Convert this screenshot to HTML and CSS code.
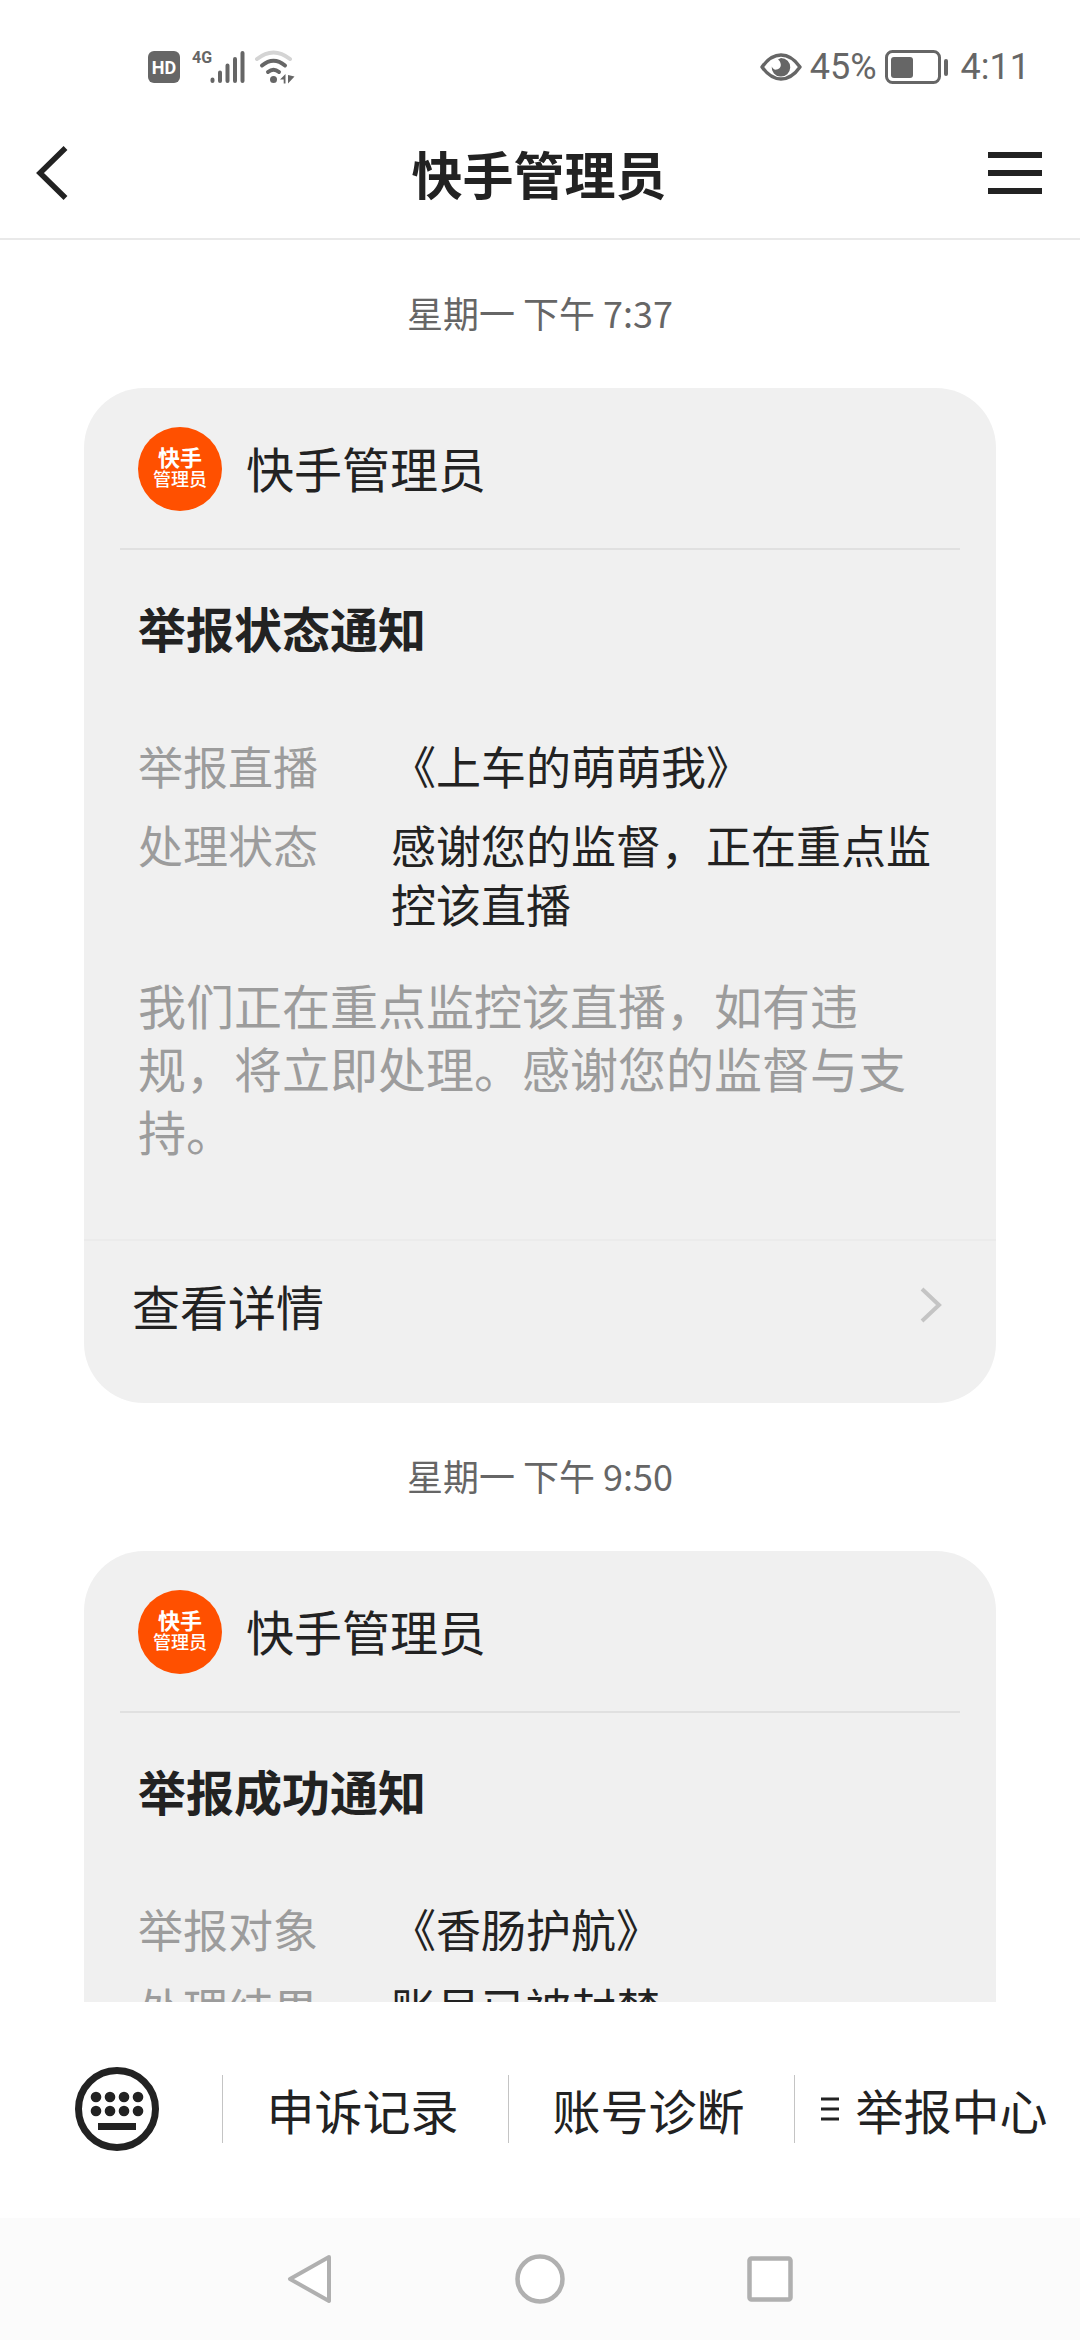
FILE: index.html
```html
<!DOCTYPE html>
<html lang="zh-CN">
<head>
<meta charset="utf-8">
<meta name="viewport" content="width=device-width, initial-scale=1">
<title>快手管理员</title>
<link rel="stylesheet" href="styles.css">
</head>
<body>
<div class="app">
  <div class="status-bar">
    <div class="status-group">
      <svg class="icon-hd" viewBox="0 0 32 32" width="32" height="32" aria-hidden="true">
        <rect width="32" height="32" rx="6" fill="#666"/>
        <text x="16" y="23" text-anchor="middle" class="hd-text">HD</text>
      </svg>
      <svg class="icon-signal" viewBox="0 0 54 36" width="54" height="36" aria-hidden="true">
        <text x="0" y="14" class="net-text">4G</text>
        <g stroke="#666" stroke-width="4" stroke-linecap="round">
          <path d="M20.500 30.500v1.500M28 23.500V32M35.500 16.500V32M43 10V32M50.500 4V32"/>
        </g>
      </svg>
      <svg class="icon-wifi" viewBox="0 0 42 36" width="42" height="36" aria-hidden="true">
        <g fill="none" stroke-width="4" stroke-linecap="round">
          <path d="M3 10Q19.500-3 36 10" stroke="#d4d4d4"/>
          <path d="M8 16.500Q19.500 7 31 16.500" stroke="#666"/>
          <path d="M14 23Q19.500 18.500 25 23" stroke="#666"/>
        </g>
        <circle cx="19.500" cy="30.500" r="3.500" fill="#666"/>
        <path d="M26 30.500L31.500 25v9.500h-1.800v-4zM34 26l6.500 1.500L34 34.500z" fill="#666"/>
      </svg>
    </div>
    <div class="status-group">
      <svg class="icon-eye" viewBox="0 0 42 30" width="42" height="30" aria-hidden="true">
        <path d="M2 15C8 6.500 14 3 21 3s13 3.500 19 12C34 23.500 28 27 21 27S8 23.500 2 15z" fill="none" stroke="#666" stroke-width="3.400" stroke-linejoin="round"/>
        <path d="M21 6a9.300 9.300 0 1 1-9.300 8.500c1 2.500 3 3.500 5 3 3-.5 4.500-3 4-5.500-.3-2-1-3-2.700-4.500z" fill="#666"/>
      </svg>
      <span class="battery-text">45%</span>
      <svg class="icon-battery" viewBox="0 0 64 34" width="64" height="34" aria-hidden="true">
        <rect x="1.500" y="1.500" width="53" height="31" rx="6" fill="none" stroke="#666" stroke-width="3"/>
        <rect x="6" y="7" width="22" height="21" rx="3" fill="#666"/>
        <rect x="59" y="9" width="4" height="17" rx="2" fill="#666"/>
      </svg>
      <span class="clock">4:11</span>
    </div>
  </div>

  <header class="header">
    <button class="icon-button" type="button" aria-label="返回">
      <svg viewBox="0 0 32 54" width="32" height="54"><path d="M29.500 2L4 27l25.500 25" fill="none" stroke="#222" stroke-width="5.500"/></svg>
    </button>
    <h1 class="header-title">快手管理员</h1>
    <button class="icon-button" type="button" aria-label="菜单">
      <svg viewBox="0 0 54 42" width="54" height="42"><path d="M0 3h54M0 21h54M0 39h54" stroke="#222" stroke-width="6"/></svg>
    </button>
  </header>

  <main class="messages">
    <time class="timestamp">星期一 下午 7:37</time>
    <article class="card">
      <div class="card-head">
        <div class="avatar"><span class="avatar-top">快手</span><span class="avatar-bottom">管理员</span></div>
        <span class="sender">快手管理员</span>
      </div>
      <div class="card-body">
        <h2 class="card-title">举报状态通知</h2>
        <dl class="fields">
          <dt>举报直播</dt><dd>《上车的萌萌我》</dd>
          <dt>处理状态</dt><dd>感谢您的监督，正在重点监控该直播</dd>
        </dl>
        <p class="note">我们正在重点监控该直播，如有违规，将立即处理。感谢您的监督与支持。</p>
      </div>
      <a class="card-link" href="#">
        <span>查看详情</span>
        <svg viewBox="0 0 22 36" width="22" height="36" aria-hidden="true"><path d="M2 2l17 16L2 34" fill="none" stroke="#c4c4c4" stroke-width="4"/></svg>
      </a>
    </article>

    <time class="timestamp">星期一 下午 9:50</time>
    <article class="card">
      <div class="card-head">
        <div class="avatar"><span class="avatar-top">快手</span><span class="avatar-bottom">管理员</span></div>
        <span class="sender">快手管理员</span>
      </div>
      <div class="card-body">
        <h2 class="card-title">举报成功通知</h2>
        <dl class="fields">
          <dt>举报对象</dt><dd>《香肠护航》</dd>
          <dt>处理结果</dt><dd>账号已被封禁</dd>
        </dl>
      </div>
    </article>
  </main>

  <footer class="toolbar">
    <button class="keyboard" type="button" aria-label="键盘">
      <svg viewBox="0 0 84 84" width="84" height="84">
        <circle cx="42" cy="42" r="38.500" fill="none" stroke="#222" stroke-width="7"/>
        <g fill="#222">
          <circle cx="21" cy="30" r="5.300"/><circle cx="35" cy="30" r="5.300"/><circle cx="49" cy="30" r="5.300"/><circle cx="63" cy="30" r="5.300"/>
          <circle cx="21" cy="44" r="5.300"/><circle cx="35" cy="44" r="5.300"/><circle cx="49" cy="44" r="5.300"/><circle cx="63" cy="44" r="5.300"/>
          <rect x="23" y="56" width="38" height="7"/>
        </g>
      </svg>
    </button>
    <button class="tab" type="button">申诉记录</button>
    <button class="tab" type="button">账号诊断</button>
    <button class="tab" type="button">
      <svg viewBox="0 0 18 24" width="18" height="24" aria-hidden="true"><path d="M0 2h18M0 12h18M0 22h18" stroke="#222" stroke-width="3"/></svg>
      举报中心
    </button>
  </footer>

  <nav class="system-nav">
    <button type="button" aria-label="后退">
      <svg viewBox="0 0 50 50" width="50" height="50"><path d="M44 3L5 25l39 22z" fill="#fff" stroke="#b0b0b0" stroke-width="4" stroke-linejoin="round"/></svg>
    </button>
    <button type="button" aria-label="主屏幕">
      <svg viewBox="0 0 50 50" width="50" height="50"><circle cx="25" cy="25" r="22.500" fill="#fff" stroke="#b0b0b0" stroke-width="4.500"/></svg>
    </button>
    <button type="button" aria-label="最近任务">
      <svg viewBox="0 0 50 50" width="50" height="50"><rect x="4.500" y="4.500" width="41" height="41" rx="2" fill="#fff" stroke="#b0b0b0" stroke-width="4.500"/></svg>
    </button>
  </nav>
</div>
</body>
</html>
```

FILE: styles.css
```css
* {
  box-sizing: border-box;
}

body {
  margin: 0;
  background: #fff;
  color: #222;
  font-family: "Noto Sans CJK SC", sans-serif;
  font-size: 48px;
}

h1, h2, p, dl, dd {
  margin: 0;
}

button {
  margin: 0;
  padding: 0;
  border: 0;
  background: none;
  color: inherit;
  font: inherit;
}

svg {
  display: block;
  flex: none;
}

.app {
  display: flex;
  flex-direction: column;
  height: 100vh;
}

/* Status bar */
.status-bar {
  display: flex;
  flex: none;
  justify-content: space-between;
  align-items: center;
  height: 108px;
  padding: 26px 50px 0 148px;
  color: #666;
  font-family: Roboto, sans-serif;
  font-size: 36px;
}

.status-group {
  display: flex;
  align-items: center;
}

.icon-signal {
  margin: 0 8px 0 12px;
}

.icon-eye {
  margin-right: 8px;
}

.icon-battery {
  margin: 0 12px 0 8px;
}

.hd-text {
  fill: #fff;
  font-size: 18px;
  font-weight: 700;
}

.net-text {
  fill: #666;
  font-size: 16px;
  font-weight: 700;
}

/* Title bar */
.header {
  display: flex;
  flex: none;
  justify-content: space-between;
  align-items: center;
  height: 132px;
  padding: 0 38px 0 36px;
  border-bottom: 2px solid #e9e9e9;
}

.icon-button {
  display: flex;
  width: 56px;
}

.icon-button:last-child {
  justify-content: flex-end;
}

.header-title {
  font-size: 51px;
  line-height: 60px;
  font-weight: 700;
}

/* Message list */
.messages {
  flex: 1;
  min-height: 0;
  overflow-y: auto;
  scrollbar-width: none;
  padding: 0 84px;
}

.timestamp {
  display: block;
  padding: 52px 0 56px;
  color: #666;
  font-size: 36px;
  line-height: 40px;
  text-align: center;
}

.card {
  border-radius: 60px;
  background: #f0f0f0;
}

.card-head {
  display: flex;
  align-items: center;
  gap: 24px;
  margin: 0 36px;
  padding: 39px 18px 37px;
  border-bottom: 2px solid #e0e0e0;
}

.avatar {
  display: flex;
  flex-direction: column;
  justify-content: center;
  align-items: center;
  width: 84px;
  height: 84px;
  padding-bottom: 4px;
  border-radius: 50%;
  background: #ff5000;
  color: #fff;
  line-height: 22px;
  text-align: center;
}

.avatar-top {
  font-size: 22px;
  font-weight: 700;
}

.avatar-bottom {
  font-size: 18px;
  font-weight: 500;
}

.sender {
  padding-bottom: 4px;
  line-height: 60px;
}

.card-body {
  padding: 47px 54px 77px;
}

.card-title {
  font-size: 48px;
  line-height: 60px;
  font-weight: 700;
}

.fields {
  display: grid;
  grid-template-columns: 253px 1fr;
  row-gap: 20px;
  margin-top: 79px;
  font-size: 45px;
  line-height: 59px;
}

.fields dt {
  color: #9c9c9c;
}

.note {
  margin-top: 40px;
  color: #9c9c9c;
  line-height: 63px;
}

.card-link {
  display: flex;
  justify-content: space-between;
  align-items: center;
  padding: 32px 54px 66px 48px;
  border-top: 2px solid #ebebeb;
  color: inherit;
  line-height: 64px;
  text-decoration: none;
}

/* Bottom toolbar */
.toolbar {
  display: grid;
  flex: none;
  grid-template-columns: 222px repeat(3, 1fr);
  align-items: center;
  height: 216px;
  padding-bottom: 2px;
}

.keyboard {
  display: flex;
  justify-content: center;
  padding-left: 12px;
}

.tab {
  display: flex;
  justify-content: center;
  align-items: center;
  gap: 16px;
  height: 68px;
  padding-right: 6px;
  border-left: 1px solid #c4c4c4;
  white-space: nowrap;
}

/* System navigation */
.system-nav {
  display: flex;
  flex: none;
  justify-content: center;
  align-items: center;
  gap: 180px;
  height: 122px;
  background: #fbfbfb;
}
```
